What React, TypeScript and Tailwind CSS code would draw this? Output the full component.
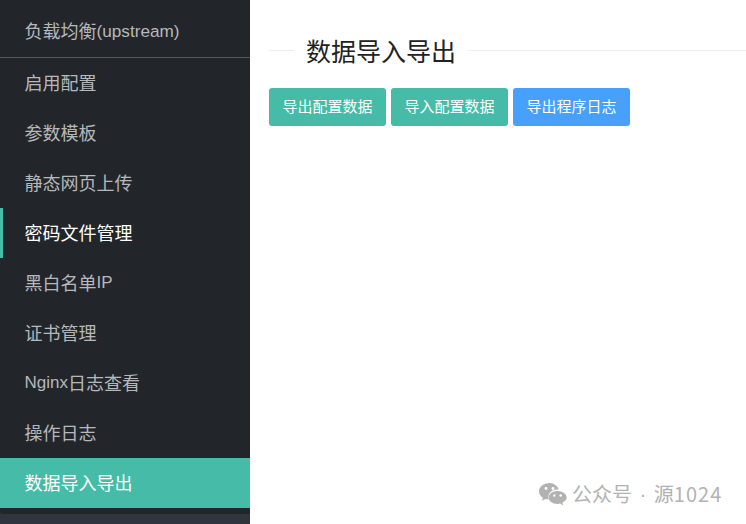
const menu = [
  { label: "启用配置" },
  { label: "参数模板" },
  { label: "静态网页上传" },
  { label: "密码文件管理", current: true },
  { label: "黑白名单", latin: "IP" },
  { label: "证书管理" },
  { latin: "Nginx", label: "日志查看" },
  { label: "操作日志" },
  { label: "数据导入导出", active: true },
];

const WechatIcon = () => (
  <svg width="28" height="23" viewBox="0 0 28 23" fill="#b2b2b2">
    <path d="M10.500 0C4.700 0 0 3.700 0 8.300c0 2.600 1.500 4.900 3.900 6.400L3 17.700l3.500-1.800c1 .3 2 .5 3.100.5-.2-.7-.3-1.400-.3-2.100 0-4.300 4-7.700 9-7.700h1.400C18.800 3 15 0 10.500 0z" />
    <path d="M18.400 8C13.200 8 9.700 11 9.700 14.500s3.500 6.500 8.700 6.500c1 0 1.900-.1 2.800-.4l3 1.900-.7-3c2.500-1.200 4.200-3 4.200-5 0-3.500-4-6.500-9.300-6.500z" />
    <circle cx="7" cy="5.500" r="1.400" fill="#fff" />
    <circle cx="14" cy="5.500" r="1.400" fill="#fff" />
    <circle cx="15.300" cy="12.500" r="1.200" fill="#fff" />
    <circle cx="21.700" cy="12.500" r="1.200" fill="#fff" />
  </svg>
);

const App = () => {
  return (
    <div className="relative flex h-[524px] w-[746px] overflow-hidden bg-white font-['Liberation_Sans','Noto_Sans_CJK_SC',sans-serif]">
      <div className="flex w-[250px] shrink-0 flex-col bg-[#30343c]">
        <div className="h-[514px] rounded-bl-[3px] bg-[#22262b]">
          <div className="flex h-[58px] items-center border-b border-[#55585c] pl-[24.500px] pt-[6px] text-lg text-[#b6b8ba]">
            负载均衡<span className="text-[17.200px]">(upstream)</span>
          </div>
          {menu.map((item) => (
            <div
              key={item.label}
              className={
                item.active
                  ? "flex h-[50px] items-center bg-[#45bba8] pl-[24.500px] pt-px text-lg text-white"
                  : item.current
                    ? "flex h-[50px] items-center border-l-[3px] border-[#45bba8] pl-[21.500px] pt-px text-lg text-white"
                    : "flex h-[50px] items-center pl-[24.500px] pt-px text-lg text-[#b6b8ba]"
              }
            >
              {item.latin === "Nginx" && (
                <span className="text-[17px]">{item.latin}</span>
              )}
              {item.label}
              {item.latin === "IP" && (
                <span className="text-[17px]">{item.latin}</span>
              )}
            </div>
          ))}
        </div>
      </div>

      <div className="flex-1 pl-[19px] pt-[34px]">
        <div className="flex h-[36px] items-start">
          <div className="mt-4 h-px w-[25px] bg-[#eeeeee]" />
          <h1 className="whitespace-nowrap px-3 text-[25px] leading-[36px] text-[#222222]">
            数据导入导出
          </h1>
          <div className="mt-4 h-px flex-1 bg-[#eeeeee]" />
        </div>
        <div className="mt-[18px] flex gap-[5px]">
          <button className="h-[38px] w-[117px] rounded-[3px] bg-[#45bba8] text-[15px] text-white">
            导出配置数据
          </button>
          <button className="h-[38px] w-[117px] rounded-[3px] bg-[#45bba8] text-[15px] text-white">
            导入配置数据
          </button>
          <button className="h-[38px] w-[117px] rounded-[3px] bg-[#46a0fc] text-[15px] text-white">
            导出程序日志
          </button>
        </div>
      </div>

      <div className="absolute left-[539px] top-[482px] flex items-center gap-[5px] font-['Noto_Sans_CJK_SC',sans-serif] text-xl leading-[24px] text-[#b2b2b2]">
        <WechatIcon />
        <span className="flex items-center whitespace-pre">
          公众号
          <span className="mx-[7.600px] font-['Liberation_Sans',sans-serif]">·</span>
          源<span className="tracking-[1px]">1024</span>
        </span>
      </div>
    </div>
  );
};

export default App;
